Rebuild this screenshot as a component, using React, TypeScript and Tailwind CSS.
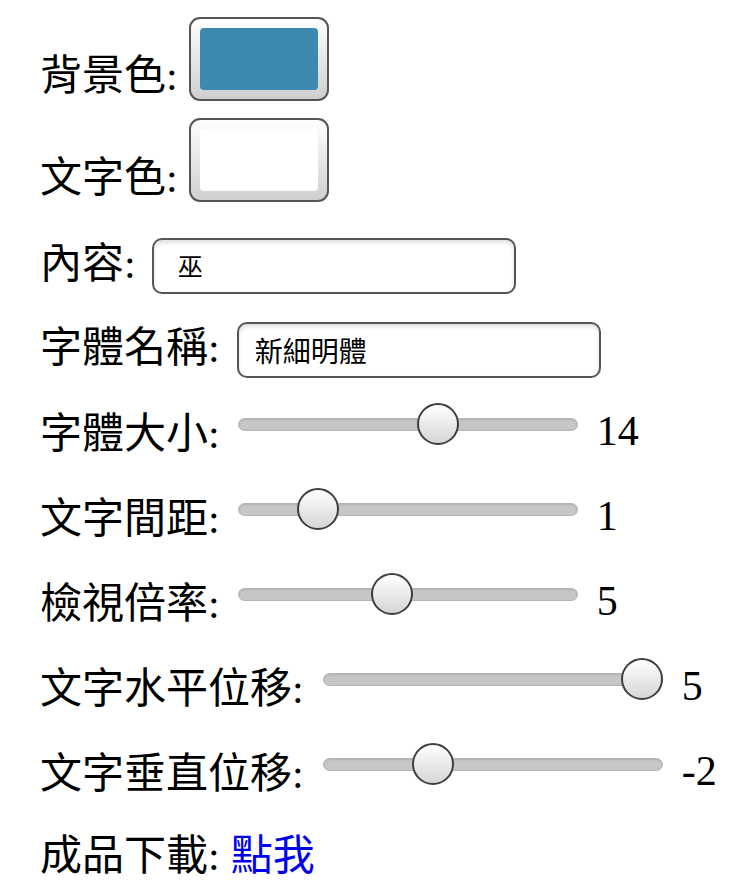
import React from 'react';

const labelFont = "font-['Liberation_Serif','Noto_Sans_CJK_TC',serif]";

type Slider = { label: string; value: string; pct: number; ml: number };

const sliders: Slider[] = [
  { label: '字體大小', value: '14', pct: 0.6, ml: 18 },
  { label: '文字間距', value: '1', pct: 0.198, ml: 18 },
  { label: '檢視倍率', value: '5', pct: 0.446, ml: 18 },
  { label: '文字水平位移', value: '5', pct: 1, ml: 19 },
  { label: '文字垂直位移', value: '-2', pct: 0.3, ml: 19 },
];

function Label({ text, className = '' }: { text: string; className?: string }) {
  return (
    <span className={`text-[42px] leading-[42px] text-black whitespace-nowrap ${className}`}>
      {text}:
    </span>
  );
}

function ColorBox({ color }: { color: string }) {
  return (
    <div className="w-[140px] h-[84px] rounded-[11px] border-2 border-[#555] bg-gradient-to-b from-white to-[#cfcfcf] p-[9px]">
      <div className="w-full h-full rounded-[4px]" style={{ background: color }} />
    </div>
  );
}

function TextBox({ value, text }: { value: string; text: string }) {
  return (
    <div
      className={`w-[364px] h-[56px] rounded-[10px] border-2 border-[#555] bg-white shadow-[inset_0_3px_4px_rgba(0,0,0,0.12)] flex items-center font-['Noto_Sans_CJK_TC',sans-serif] text-black ${text}`}
    >
      {value}
    </div>
  );
}

function Range({ pct }: { pct: number }) {
  return (
    <div className="relative w-[340px] h-[42px] flex items-center">
      <div className="w-full h-[13px] rounded-full bg-[#c6c6c6] border border-[#b4b4b4] shadow-[inset_0_1px_2px_rgba(0,0,0,0.1)]" />
      <div
        className="absolute top-0 w-[42px] h-[42px] rounded-full border-2 border-[#3f3f3f] bg-gradient-to-b from-white to-[#d6d6d6]"
        style={{ left: Math.round(pct * 298) }}
      />
    </div>
  );
}

export default function App() {
  return (
    <div className={`min-h-[892px] bg-white pt-[17px] pl-[40px] ${labelFont}`}>
      {/* 背景色 */}
      <div className="flex items-start h-[101px]">
        <Label text="背景色" className="mt-[38px]" />
        <div className="ml-[11px]">
          <ColorBox color="#3d8ab1" />
        </div>
      </div>

      {/* 文字色 */}
      <div className="flex items-start h-[120px]">
        <Label text="文字色" className="mt-[39px]" />
        <div className="ml-[11px]">
          <ColorBox color="#ffffff" />
        </div>
      </div>

      {/* 內容 */}
      <div className="flex items-start h-[84px]">
        <Label text="內容" className="mt-[5px]" />
        <div className="ml-[16px]">
          <TextBox value="巫" text="text-[25px] pl-[24px]" />
        </div>
      </div>

      {/* 字體名稱 */}
      <div className="flex items-start h-[81px]">
        <Label text="字體名稱" className="mt-[5px]" />
        <div className="ml-[17px]">
          <TextBox value="新細明體" text="text-[28px] pl-[16px]" />
        </div>
      </div>

      {sliders.map((s) => (
        <div key={s.label} className="flex items-start h-[85px]">
          <Label text={s.label} className="mt-[10px]" />
          <div style={{ marginLeft: s.ml }}>
            <Range pct={s.pct} />
          </div>
          <span className="ml-[19px] mt-[7px] text-[42px] leading-[42px] text-black">{s.value}</span>
        </div>
      ))}

      {/* 成品下載 */}
      <div className="flex items-start h-[60px]">
        <Label text="成品下載" className="mt-[7px]" />
        <a href="#" className="ml-[11px] mt-[7px] text-[42px] leading-[42px] text-[#0000ee] no-underline">
          點我
        </a>
      </div>
    </div>
  );
}
